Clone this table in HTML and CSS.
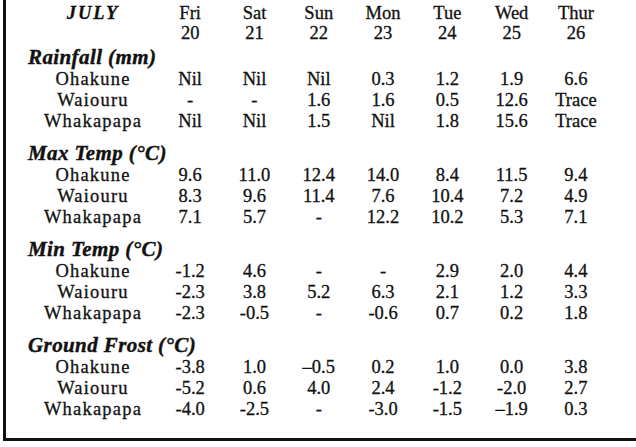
FILE: index.html
```html
<!DOCTYPE html>
<html>
<head>
<meta charset="utf-8">
<link rel="stylesheet" href="styles.css">
</head>
<body>
<div class="frame">
  <div class="row head first"><span class="month">JULY</span><span>Fri</span><span>Sat</span><span>Sun</span><span>Mon</span><span>Tue</span><span>Wed</span><span>Thur</span></div>
  <div class="row head"><span></span><span>20</span><span>21</span><span>22</span><span>23</span><span>24</span><span>25</span><span>26</span></div>

  <h2 class="sec">Rainfall (mm)</h2>
  <div class="row"><span class="stn">Ohakune</span><span>Nil</span><span>Nil</span><span>Nil</span><span>0.3</span><span>1.2</span><span>1.9</span><span>6.6</span></div>
  <div class="row"><span class="stn">Waiouru</span><span>-</span><span>-</span><span>1.6</span><span>1.6</span><span>0.5</span><span>12.6</span><span>Trace</span></div>
  <div class="row"><span class="stn">Whakapapa</span><span>Nil</span><span>Nil</span><span>1.5</span><span>Nil</span><span>1.8</span><span>15.6</span><span>Trace</span></div>

  <h2 class="sec">Max Temp (°C)</h2>
  <div class="row"><span class="stn">Ohakune</span><span>9.6</span><span>11.0</span><span>12.4</span><span>14.0</span><span>8.4</span><span>11.5</span><span>9.4</span></div>
  <div class="row"><span class="stn">Waiouru</span><span>8.3</span><span>9.6</span><span>11.4</span><span>7.6</span><span>10.4</span><span>7.2</span><span>4.9</span></div>
  <div class="row"><span class="stn">Whakapapa</span><span>7.1</span><span>5.7</span><span>-</span><span>12.2</span><span>10.2</span><span>5.3</span><span>7.1</span></div>

  <h2 class="sec">Min Temp (°C)</h2>
  <div class="row"><span class="stn">Ohakune</span><span>-1.2</span><span>4.6</span><span>-</span><span>-</span><span>2.9</span><span>2.0</span><span>4.4</span></div>
  <div class="row"><span class="stn">Waiouru</span><span>-2.3</span><span>3.8</span><span>5.2</span><span>6.3</span><span>2.1</span><span>1.2</span><span>3.3</span></div>
  <div class="row"><span class="stn">Whakapapa</span><span>-2.3</span><span>-0.5</span><span>-</span><span>-0.6</span><span>0.7</span><span>0.2</span><span>1.8</span></div>

  <h2 class="sec">Ground Frost (°C)</h2>
  <div class="row"><span class="stn">Ohakune</span><span>-3.8</span><span>1.0</span><span>–0.5</span><span>0.2</span><span>1.0</span><span>0.0</span><span>3.8</span></div>
  <div class="row"><span class="stn">Waiouru</span><span>-5.2</span><span>0.6</span><span>4.0</span><span>2.4</span><span>-1.2</span><span>-2.0</span><span>2.7</span></div>
  <div class="row"><span class="stn">Whakapapa</span><span>-4.0</span><span>-2.5</span><span>-</span><span>-3.0</span><span>-1.5</span><span>–1.9</span><span>0.3</span></div>
</div>
</body>
</html>
```
FILE: styles.css
```css
html, body {
  margin: 0;
  padding: 0;
  background: #ffffff;
}

body {
  font-family: "Liberation Serif", "Times New Roman", serif;
  color: #111111;
}

.frame {
  margin-left: 3px;
  width: 614px;
  height: 438px;
  border: 3px solid #111111;
  border-top: none;
  padding-left: 22px;
  box-sizing: content-box;
}

.row {
  display: grid;
  grid-template-columns: 130px repeat(7, 64.3px);
  height: 21px;
  line-height: 21px;
  font-size: 18.5px;
  text-align: center;
  white-space: nowrap;
  -webkit-text-stroke: 0.3px #111111;
}

.row.head {
  height: 20px;
  line-height: 20px;
}

.row.first {
  padding-top: 3px;
}

.month {
  font-weight: bold;
  font-style: italic;
  letter-spacing: 2px;
}

.stn {
  letter-spacing: 1.2px;
}

.sec {
  margin: 9px 0 0 0;
  height: 24px;
  line-height: 24px;
  font-size: 21px;
  font-weight: bold;
  font-style: italic;
  letter-spacing: 0.4px;
  -webkit-text-stroke: 0.4px #111111;
}

.frame > .sec:first-of-type {
  margin-top: 2px;
}
```
